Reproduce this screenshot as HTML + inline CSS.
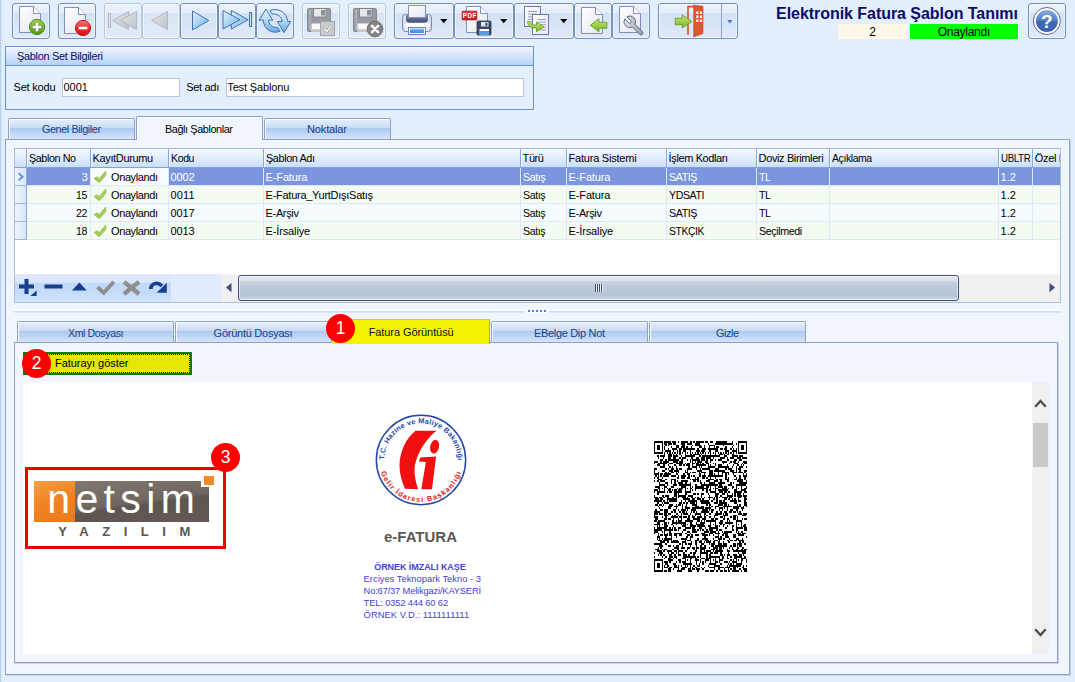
<!DOCTYPE html>
<html><head><meta charset="utf-8"><title>Elektronik Fatura Şablon Tanımı</title>
<style>
html,body{margin:0;padding:0}
body{width:1075px;height:682px;overflow:hidden;position:relative;background:#e3efff;font-family:"Liberation Sans",sans-serif;font-size:11px}
div,span.t,svg{position:absolute;box-sizing:border-box}
span.t{white-space:pre;line-height:1}
.btn{border:1px solid #7191c2;border-radius:3px;background:linear-gradient(#eaf1fb 0,#e6eefa 26%,#d3e1f5 27%,#dfe9f8 100%);box-shadow:inset 0 0 0 1px rgba(255,255,255,.55)}
.btn.dis{border-color:#b6c7e0;background:linear-gradient(#eaf1fb 0,#e6eefa 26%,#d9e4f4 27%,#e2ebf8 100%)}
.tab{border:1px solid #8ba3cb;border-bottom:none;border-radius:2px 2px 0 0;background:linear-gradient(#e6eefb 0,#dbe6f8 20%,#c9dbf5 45%,#adc9f0 47%,#c2d7f5 75%,#d6e4f9 100%);box-shadow:inset 1px 1px 0 rgba(255,255,255,.8)}
.pnl{border:1px solid #8ba1c9;background:#f1f6fe;box-shadow:1px 1px 0 #c3d2ea}

</style></head>
<body>
<div style="left:0px;top:0px;width:1px;height:682px;background:#b5cfec"></div>
<div style="left:1px;top:0px;width:1px;height:682px;background:#d9e7f9"></div>
<div class="btn" style="left:12px;top:3px;width:38px;height:36px"></div>
<div class="btn" style="left:58px;top:3px;width:38px;height:36px"></div>
<div class="btn dis" style="left:104px;top:3px;width:38px;height:36px"></div>
<div class="btn dis" style="left:142px;top:3px;width:38px;height:36px"></div>
<div class="btn" style="left:180px;top:3px;width:38px;height:36px"></div>
<div class="btn" style="left:218px;top:3px;width:38px;height:36px"></div>
<div class="btn" style="left:256px;top:3px;width:38px;height:36px"></div>
<div class="btn dis" style="left:302px;top:3px;width:38px;height:36px"></div>
<div class="btn dis" style="left:348px;top:3px;width:38px;height:36px"></div>
<div class="btn" style="left:394px;top:3px;width:60px;height:36px"></div>
<div class="btn" style="left:454px;top:3px;width:60px;height:36px"></div>
<div class="btn" style="left:514px;top:3px;width:60px;height:36px"></div>
<div class="btn" style="left:574px;top:3px;width:38px;height:36px"></div>
<div class="btn" style="left:612px;top:3px;width:38px;height:36px"></div>
<div class="btn" style="left:658px;top:3px;width:80px;height:36px"></div>
<div style="left:721px;top:4px;width:1px;height:34px;background:#8aa3cc"></div>
<div class="btn" style="left:1028px;top:3px;width:38px;height:36px"></div>
<svg style="left:0;top:0" width="1075" height="42" viewBox="0 0 1075 42"><defs>
<linearGradient id="pg" x1="0" y1="0" x2="1" y2="1"><stop offset="0" stop-color="#ffffff"/><stop offset="1" stop-color="#e3e6f2"/></linearGradient>
<linearGradient id="gr" x1="0" y1="0" x2="0" y2="1"><stop offset="0" stop-color="#a6d64a"/><stop offset="1" stop-color="#4f9412"/></linearGradient>
<linearGradient id="rd" x1="0" y1="0" x2="0" y2="1"><stop offset="0" stop-color="#ff7a7a"/><stop offset=".5" stop-color="#f02a2a"/><stop offset="1" stop-color="#d80f0f"/></linearGradient>
<linearGradient id="bl" x1="0" y1="0" x2="1" y2="1"><stop offset="0" stop-color="#e3f2fc"/><stop offset="1" stop-color="#6fb0e6"/></linearGradient>
<linearGradient id="gy" x1="0" y1="0" x2="1" y2="1"><stop offset="0" stop-color="#e3e5e8"/><stop offset="1" stop-color="#bfc3c9"/></linearGradient>
<linearGradient id="ga" x1="0" y1="0" x2="0" y2="1"><stop offset="0" stop-color="#c6e77e"/><stop offset=".5" stop-color="#9fd04c"/><stop offset="1" stop-color="#76b42a"/></linearGradient>
<linearGradient id="hp" x1="0" y1="0" x2="0" y2="1"><stop offset="0" stop-color="#86acde"/><stop offset=".5" stop-color="#4f7cc6"/><stop offset=".52" stop-color="#3f6ab8"/><stop offset="1" stop-color="#3a63b2"/></linearGradient>
<linearGradient id="rf" x1="0" y1="0" x2="0" y2="1"><stop offset="0" stop-color="#e6f5fd"/><stop offset=".5" stop-color="#b3d8f3"/><stop offset="1" stop-color="#66a7e0"/></linearGradient>
<linearGradient id="wr" x1="0" y1="0" x2="1" y2="0"><stop offset="0" stop-color="#e3e7ec"/><stop offset="1" stop-color="#96a0ae"/></linearGradient>
<linearGradient id="pr" x1="0" y1="0" x2="1" y2="0"><stop offset="0" stop-color="#c3cee8"/><stop offset=".18" stop-color="#f4f7fc"/><stop offset=".82" stop-color="#f4f7fc"/><stop offset="1" stop-color="#c3cee8"/></linearGradient>
<linearGradient id="pdfr" x1="0" y1="0" x2="0" y2="1"><stop offset="0" stop-color="#e24040"/><stop offset="1" stop-color="#c01c1c"/></linearGradient>
<linearGradient id="ps" x1="0" y1="0" x2="0" y2="1"><stop offset="0" stop-color="#8b98ba"/><stop offset=".5" stop-color="#5b698e"/><stop offset="1" stop-color="#434f74"/></linearGradient>
<linearGradient id="pb" x1="0" y1="0" x2="0" y2="1"><stop offset="0" stop-color="#7cc0f4"/><stop offset="1" stop-color="#2f7fd6"/></linearGradient>
</defs><path d="M19.5 6.5H33.5L40.5 13.5V32.5H19.5Z" fill="url(#pg)" stroke="#7682b6" stroke-width=".9"/><path d="M33.5 6.5V13.5H40.5Z" fill="#fdfdff"/><path d="M33.5 6.5V13.5H40.5" fill="none" stroke="#7682b6" stroke-width=".9"/><circle cx="37" cy="27" r="7.6" fill="url(#gr)" stroke="#4b8a12" stroke-width="1"/><path d="M35.5 22.5h3v3h3v3h-3v3h-3v-3h-3v-3h3z" fill="#fff" stroke="#7d8c74" stroke-width=".6"/><path d="M64.5 7.5H78.5L85.5 14.5V33.5H64.5Z" fill="url(#pg)" stroke="#7682b6" stroke-width=".9"/><path d="M78.5 7.5V14.5H85.5Z" fill="#fdfdff"/><path d="M78.5 7.5V14.5H85.5" fill="none" stroke="#7682b6" stroke-width=".9"/><circle cx="83" cy="28" r="7.6" fill="url(#rd)" stroke="#c41515" stroke-width="1"/><rect x="78.5" y="26.5" width="9" height="3" fill="#fff" stroke="#a86a6a" stroke-width=".6"/><rect x="108.5" y="13.5" width="2" height="14" fill="#e2e4e8" stroke="#b4b8c0" stroke-width="1"/><path d="M128.5 11.5V29.5L112.5 20.5Z" fill="url(#gy)" stroke="#b4b8c0" stroke-width="1"/><path d="M136.5 11.5V29.5L120.5 20.5Z" fill="url(#gy)" stroke="#b4b8c0" stroke-width="1"/><path d="M167.5 11.5V29.5L151.5 20.5Z" fill="url(#gy)" stroke="#b4b8c0" stroke-width="1"/><path d="M192.5 11V30L208.8 20.5Z" fill="url(#bl)" stroke="#3f72b8" stroke-width="1"/><path d="M231.3 10.5V29L248.2 19.7Z" fill="url(#bl)" stroke="#3f72b8" stroke-width="1"/><path d="M223 10.5V29L240 19.7Z" fill="url(#bl)" stroke="#3f72b8" stroke-width="1"/><rect x="249.5" y="12.5" width="2" height="14" fill="#cfe6f8" stroke="#3f72b8" stroke-width="1"/><g fill="url(#rf)" stroke="#3a70b8" stroke-width="1" stroke-linejoin="round"><path d="M266 9L272.700 20.100L268.500 20.100C268.800 24.500 272.500 28 277.400 27.300L280.200 31.200C272 34.500 263.800 29.500 263.200 20.100L259.100 20.100Z"/><path d="M283.900 32.600L277.400 21.500L282.200 21.500C281.800 17 278 13.600 272.200 14L269.900 10.400C278.500 7.500 287 12.500 287.800 21.500L290.800 21.500Z"/></g><rect x="307.5" y="8.5" width="23" height="23" rx="1.2" fill="#989ca2" stroke="#858990"/><rect x="309" y="9" width="2" height="21" fill="#abafb5"/><rect x="313.5" y="8.5" width="12.5" height="8.5" fill="#e6e8ea" stroke="#74787f" stroke-width=".8"/><rect x="321" y="10" width="4" height="5.5" fill="#8a8e95"/><rect x="311.5" y="23.5" width="15.5" height="8" fill="#fbfbfb"/><rect x="311.5" y="29" width="15.5" height="2.5" fill="#c9cbce"/><rect x="320.5" y="21.5" width="14" height="14" fill="#c9cbce" stroke="#a2a5a9"/><path d="M324.2 28.8 L326.8 31.6 L331.2 25.8" fill="none" stroke="#9a9da2" stroke-width="2.6" stroke-linecap="round" stroke-linejoin="round"/><path d="M324.2 28.8 L326.8 31.6 L331.2 25.8" fill="none" stroke="#fff" stroke-width="1.3" stroke-linecap="round" stroke-linejoin="round"/><rect x="353.5" y="8.5" width="23" height="23" rx="1.2" fill="#989ca2" stroke="#858990"/><rect x="355" y="9" width="2" height="21" fill="#abafb5"/><rect x="359.5" y="8.5" width="12.5" height="8.5" fill="#e6e8ea" stroke="#74787f" stroke-width=".8"/><rect x="367" y="10" width="4" height="5.5" fill="#8a8e95"/><rect x="357.5" y="23.5" width="15.5" height="8" fill="#fbfbfb"/><rect x="357.5" y="29" width="15.5" height="2.5" fill="#c9cbce"/><circle cx="375" cy="29" r="7.8" fill="#858585" stroke="#6e6e6e"/><path d="M371.9 25.9 L378.1 32.1 M378.1 25.9 L371.9 32.1" stroke="#fff" stroke-width="2.5" stroke-linecap="round"/><rect x="402.5" y="14.5" width="29" height="17" rx="3" fill="url(#pr)" stroke="#7a8cc0"/><rect x="404" y="23.500" width="26" height="3" fill="#fff" opacity=".8"/><path d="M406 14.5H428V19.5Q428 22.700 424.500 22.700H409.500Q406 22.700 406 19.500Z" fill="url(#ps)"/><rect x="408.5" y="5.5" width="17" height="12" fill="url(#pg)" stroke="#8490b6"/><rect x="408.5" y="27.500" width="17" height="7" fill="#fff" stroke="#6474aa" stroke-width=".9"/><rect x="410" y="28.600" width="14" height="4.300" fill="url(#pb)"/><path d="M466.5 6.5H480.5L487.5 13.5V32.5H466.5Z" fill="url(#pg)" stroke="#7682b6" stroke-width=".9"/><path d="M480.5 6.5V13.5H487.5Z" fill="#fdfdff"/><path d="M480.5 6.5V13.5H487.5" fill="none" stroke="#7682b6" stroke-width=".9"/><rect x="462" y="11" width="15" height="9" rx=".8" fill="url(#pdfr)" stroke="#b51a1a" stroke-width=".6"/><text x="469.8" y="17.800" font-family="Liberation Sans, sans-serif" font-size="6.3" font-weight="700" fill="#fff" text-anchor="middle" letter-spacing=".45">PDF</text><rect x="477" y="21" width="14" height="14" rx="1" fill="#3b4664" stroke="#2c3650" stroke-width=".8"/><rect x="481" y="22" width="7.5" height="4.5" fill="#dfe6f5"/><rect x="485.5" y="22.800" width="1.8" height="3" fill="#2c3650"/><rect x="479.5" y="29" width="9.5" height="5.5" fill="#fff"/><rect x="479.5" y="31" width="9.5" height="3.5" fill="#4b9be8"/><rect x="524.5" y="6.5" width="16" height="20" fill="url(#pg)" stroke="#6b78ad"/><rect x="528" y="11.0" width="9" height="1" fill="#9aa4c6"/><rect x="528" y="13.6" width="9" height="1" fill="#9aa4c6"/><rect x="528" y="16.2" width="9" height="1" fill="#9aa4c6"/><rect x="528" y="18.8" width="9" height="1" fill="#9aa4c6"/><rect x="528" y="21.4" width="9" height="1" fill="#9aa4c6"/><rect x="532.5" y="14.5" width="16" height="20" fill="url(#pg)" stroke="#6b78ad"/><rect x="538" y="19.0" width="8" height="1" fill="#9aa4c6"/><rect x="538" y="21.6" width="8" height="1" fill="#9aa4c6"/><rect x="538" y="24.2" width="8" height="1" fill="#9aa4c6"/><rect x="538" y="26.8" width="8" height="1" fill="#9aa4c6"/><rect x="538" y="29.4" width="8" height="1" fill="#9aa4c6"/><path d="M527.5 21.5 C528 26.5 531.500 28.200 536.5 28 L536.5 31.8 L544 27 L536.5 22 L536.5 25 C533 25.2 530.500 24.500 529.500 21.500Z" fill="url(#ga)" stroke="#5f9d20" stroke-width=".8" stroke-linejoin="round"/><path d="M581.5 7.5H595.5L602.5 14.5V33.5H581.5Z" fill="url(#pg)" stroke="#7682b6" stroke-width=".9"/><path d="M595.5 7.5V14.5H602.5Z" fill="#fdfdff"/><path d="M595.5 7.5V14.5H602.5" fill="none" stroke="#7682b6" stroke-width=".9"/><path d="M590.3 25.2 L599 18.700 V22.3 H606.8 V28.2 H599 V31.8Z" fill="url(#ga)" stroke="#5f9d20" stroke-width=".9" stroke-linejoin="round"/><path d="M619.5 6.5H633.5L640.5 13.5V32.5H619.5Z" fill="url(#pg)" stroke="#7682b6" stroke-width=".9"/><path d="M633.5 6.5V13.5H640.5Z" fill="#fdfdff"/><path d="M633.5 6.5V13.5H640.5" fill="none" stroke="#7682b6" stroke-width=".9"/><path d="M624.780 18.900A5.800 5.800 0 0 0 632.350 27.030L639.770 34.450A1.900 1.900 0 0 0 642.450 31.770L635.030 24.350A5.800 5.800 0 0 0 626.900 16.780L630.860 20.740A1.500 1.500 0 0 1 628.740 22.860Z" fill="url(#wr)" stroke="#566072" stroke-width=".9" stroke-linejoin="round"/><path d="M688 35 V6.6 H702.500" fill="none" stroke="#d4512b" stroke-width="1.6"/><path d="M693.7 5 L703 6.6 V33.6 L693.7 37Z" fill="#dc5630" stroke="#c7472a" stroke-width=".6"/><rect x="696.1" y="11.4" width="2.4" height="2.6" fill="#d9f0de"/><rect x="696.1" y="15.4" width="2.4" height="2.6" fill="#d9f0de"/><rect x="696.1" y="19.4" width="2.4" height="2.6" fill="#d9f0de"/><rect x="699.8" y="11.4" width="2.4" height="2.6" fill="#d9f0de"/><rect x="699.8" y="15.4" width="2.4" height="2.6" fill="#d9f0de"/><rect x="699.8" y="19.4" width="2.4" height="2.6" fill="#d9f0de"/><path d="M675.3 18.3 H682.2 V14.9 L691.8 21.5 L682.2 28 V24.700 H675.3Z" fill="url(#ga)" stroke="#5f9d20" stroke-width=".9" stroke-linejoin="round"/><circle cx="1046.9" cy="21" r="13.5" fill="#fff" stroke="#5a66a0" stroke-width="1"/><circle cx="1046.9" cy="21" r="11" fill="url(#hp)"/><text x="1046.9" y="28" font-family="Liberation Sans, sans-serif" font-size="19" font-weight="700" fill="#fff" text-anchor="middle">?</text></svg>
<svg style="left:439.8px;top:19px" width="7.4" height="5.2" viewBox="0 0 7.4 5.2"><path d="M0.2 0H7.2L3.7 4.2Z" fill="#000"/></svg>
<svg style="left:499.8px;top:19px" width="7.4" height="5.2" viewBox="0 0 7.4 5.2"><path d="M0.2 0H7.2L3.7 4.2Z" fill="#000"/></svg>
<svg style="left:559.8px;top:19px" width="7.4" height="5.2" viewBox="0 0 7.4 5.2"><path d="M0.2 0H7.2L3.7 4.2Z" fill="#000"/></svg>
<svg style="left:726.6px;top:20px" width="5.8" height="4.4" viewBox="0 0 5.8 4.4"><path d="M0.2 0H5.6L2.9 3.4Z" fill="#4a78c0"/></svg>
<span class="t" style="top:5.76px;font-size:16px;color:#0b0b6b;font-weight:700;letter-spacing:-0.044px;left:776.00px;">Elektronik Fatura Şablon Tanımı</span>
<div style="left:838px;top:24px;width:70px;height:15px;background:#fff8e8"></div>
<div style="left:910px;top:24px;width:108px;height:15px;background:#00ff00"></div>
<span class="t" style="top:25.84px;font-size:12px;color:#000;left:869.16px;">2</span>
<span class="t" style="top:25.84px;font-size:12px;color:#000;letter-spacing:-0.275px;left:937.75px;">Onaylandı</span>
<div style="left:5px;top:46px;width:529px;height:64px;border:1px solid #6593dc"></div>
<div style="left:6px;top:47px;width:527px;height:19px;background:linear-gradient(#eaf2fe 0,#d5e5fb 45%,#b5d1f8 100%);border-bottom:1px solid #6593dc;border-top:1px solid #fff"></div>
<span class="t" style="top:50.69px;font-size:11px;color:#0a0a6a;letter-spacing:-0.334px;left:17px;">Şablon Set Bilgileri</span>
<span class="t" style="top:81.69px;font-size:11px;color:#000;letter-spacing:-0.203px;left:13.5px;">Set kodu</span>
<div style="left:62px;top:78px;width:118px;height:19px;background:#fff;border:1px solid #b7c6de"></div>
<span class="t" style="top:81.69px;font-size:11px;color:#000;letter-spacing:0.005px;left:63.5px;">0001</span>
<span class="t" style="top:81.69px;font-size:11px;color:#000;letter-spacing:-0.310px;left:186.2px;">Set adı</span>
<div style="left:226px;top:78px;width:298px;height:19px;background:#fff;border:1px solid #b7c6de"></div>
<span class="t" style="top:81.69px;font-size:11px;color:#000;letter-spacing:-0.146px;left:227.3px;">Test Şablonu</span>
<div class="pnl" style="left:5px;top:139px;width:1065px;height:536px"></div>
<div class="tab" style="left:8px;top:118px;width:127px;height:21px"></div>
<div class="tab" style="left:264px;top:118px;width:127px;height:21px"></div>
<div class="tab" style="left:136px;top:116px;width:127px;height:24px;background:#f1f6fe;border-color:#8ba1c9"></div>
<span class="t" style="top:123.69px;font-size:11px;color:#15428b;letter-spacing:-0.420px;left:42px;transform:scaleX(0.9840);transform-origin:0 0;">Genel Bilgiler</span>
<span class="t" style="top:123.69px;font-size:11px;color:#000;letter-spacing:-0.420px;left:164.6px;transform:scaleX(0.9894);transform-origin:0 0;">Bağlı Şablonlar</span>
<span class="t" style="top:123.69px;font-size:11px;color:#15428b;letter-spacing:-0.138px;left:307px;">Noktalar</span>
<div style="left:14px;top:148px;width:1047px;height:155px;background:#fff;border:1px solid #a9c0e3"></div>
<div style="left:14px;top:148px;width:1047px;height:20px;background:linear-gradient(#f5f9ff 0,#e6f0fd 40%,#c9defb 100%);border-top:1px solid #a3badd;border-bottom:1px solid #7fa3dc;border-left:1px solid #a9c0e3;border-right:1px solid #a9c0e3"></div>
<div style="left:26px;top:149px;width:1px;height:18px;background:#86a8dc"></div>
<div style="left:27px;top:149px;width:1px;height:18px;background:rgba(255,255,255,.75)"></div>
<div style="left:90px;top:149px;width:1px;height:18px;background:#86a8dc"></div>
<div style="left:91px;top:149px;width:1px;height:18px;background:rgba(255,255,255,.75)"></div>
<div style="left:168px;top:149px;width:1px;height:18px;background:#86a8dc"></div>
<div style="left:169px;top:149px;width:1px;height:18px;background:rgba(255,255,255,.75)"></div>
<div style="left:263px;top:149px;width:1px;height:18px;background:#86a8dc"></div>
<div style="left:264px;top:149px;width:1px;height:18px;background:rgba(255,255,255,.75)"></div>
<div style="left:520px;top:149px;width:1px;height:18px;background:#86a8dc"></div>
<div style="left:521px;top:149px;width:1px;height:18px;background:rgba(255,255,255,.75)"></div>
<div style="left:566px;top:149px;width:1px;height:18px;background:#86a8dc"></div>
<div style="left:567px;top:149px;width:1px;height:18px;background:rgba(255,255,255,.75)"></div>
<div style="left:666px;top:149px;width:1px;height:18px;background:#86a8dc"></div>
<div style="left:667px;top:149px;width:1px;height:18px;background:rgba(255,255,255,.75)"></div>
<div style="left:756px;top:149px;width:1px;height:18px;background:#86a8dc"></div>
<div style="left:757px;top:149px;width:1px;height:18px;background:rgba(255,255,255,.75)"></div>
<div style="left:829px;top:149px;width:1px;height:18px;background:#86a8dc"></div>
<div style="left:830px;top:149px;width:1px;height:18px;background:rgba(255,255,255,.75)"></div>
<div style="left:998px;top:149px;width:1px;height:18px;background:#86a8dc"></div>
<div style="left:999px;top:149px;width:1px;height:18px;background:rgba(255,255,255,.75)"></div>
<div style="left:1032px;top:149px;width:1px;height:18px;background:#86a8dc"></div>
<div style="left:1033px;top:149px;width:1px;height:18px;background:rgba(255,255,255,.75)"></div>
<div style="left:27px;top:168px;width:1033px;height:18px;background:#7b96df;border-bottom:1px solid #dce8fa"></div>
<div style="left:91px;top:168px;width:77px;height:17px;background:#f8fbff"></div>
<div style="left:90px;top:168px;width:1px;height:18px;background:#dce8fa"></div>
<div style="left:168px;top:168px;width:1px;height:18px;background:#dce8fa"></div>
<div style="left:263px;top:168px;width:1px;height:18px;background:#dce8fa"></div>
<div style="left:520px;top:168px;width:1px;height:18px;background:#dce8fa"></div>
<div style="left:566px;top:168px;width:1px;height:18px;background:#dce8fa"></div>
<div style="left:666px;top:168px;width:1px;height:18px;background:#dce8fa"></div>
<div style="left:756px;top:168px;width:1px;height:18px;background:#dce8fa"></div>
<div style="left:829px;top:168px;width:1px;height:18px;background:#dce8fa"></div>
<div style="left:998px;top:168px;width:1px;height:18px;background:#dce8fa"></div>
<div style="left:1032px;top:168px;width:1px;height:18px;background:#dce8fa"></div>
<div style="left:15px;top:168px;width:12px;height:18px;background:linear-gradient(90deg,#eef4fd,#d9e6f9);border-bottom:1px solid #9fbbe3;border-right:1px solid #86a8dc"></div>
<div style="left:27px;top:186px;width:1033px;height:18px;background:#f4fbf1;border-bottom:1px solid #dce8fa"></div>
<div style="left:90px;top:186px;width:1px;height:18px;background:#dce8fa"></div>
<div style="left:168px;top:186px;width:1px;height:18px;background:#dce8fa"></div>
<div style="left:263px;top:186px;width:1px;height:18px;background:#dce8fa"></div>
<div style="left:520px;top:186px;width:1px;height:18px;background:#dce8fa"></div>
<div style="left:566px;top:186px;width:1px;height:18px;background:#dce8fa"></div>
<div style="left:666px;top:186px;width:1px;height:18px;background:#dce8fa"></div>
<div style="left:756px;top:186px;width:1px;height:18px;background:#dce8fa"></div>
<div style="left:829px;top:186px;width:1px;height:18px;background:#dce8fa"></div>
<div style="left:998px;top:186px;width:1px;height:18px;background:#dce8fa"></div>
<div style="left:1032px;top:186px;width:1px;height:18px;background:#dce8fa"></div>
<div style="left:15px;top:186px;width:12px;height:18px;background:linear-gradient(90deg,#eef4fd,#d9e6f9);border-bottom:1px solid #9fbbe3;border-right:1px solid #86a8dc"></div>
<div style="left:27px;top:204px;width:1033px;height:18px;background:#f5faff;border-bottom:1px solid #dce8fa"></div>
<div style="left:90px;top:204px;width:1px;height:18px;background:#dce8fa"></div>
<div style="left:168px;top:204px;width:1px;height:18px;background:#dce8fa"></div>
<div style="left:263px;top:204px;width:1px;height:18px;background:#dce8fa"></div>
<div style="left:520px;top:204px;width:1px;height:18px;background:#dce8fa"></div>
<div style="left:566px;top:204px;width:1px;height:18px;background:#dce8fa"></div>
<div style="left:666px;top:204px;width:1px;height:18px;background:#dce8fa"></div>
<div style="left:756px;top:204px;width:1px;height:18px;background:#dce8fa"></div>
<div style="left:829px;top:204px;width:1px;height:18px;background:#dce8fa"></div>
<div style="left:998px;top:204px;width:1px;height:18px;background:#dce8fa"></div>
<div style="left:1032px;top:204px;width:1px;height:18px;background:#dce8fa"></div>
<div style="left:15px;top:204px;width:12px;height:18px;background:linear-gradient(90deg,#eef4fd,#d9e6f9);border-bottom:1px solid #9fbbe3;border-right:1px solid #86a8dc"></div>
<div style="left:27px;top:222px;width:1033px;height:18px;background:#f4fbf1;border-bottom:1px solid #dce8fa"></div>
<div style="left:90px;top:222px;width:1px;height:18px;background:#dce8fa"></div>
<div style="left:168px;top:222px;width:1px;height:18px;background:#dce8fa"></div>
<div style="left:263px;top:222px;width:1px;height:18px;background:#dce8fa"></div>
<div style="left:520px;top:222px;width:1px;height:18px;background:#dce8fa"></div>
<div style="left:566px;top:222px;width:1px;height:18px;background:#dce8fa"></div>
<div style="left:666px;top:222px;width:1px;height:18px;background:#dce8fa"></div>
<div style="left:756px;top:222px;width:1px;height:18px;background:#dce8fa"></div>
<div style="left:829px;top:222px;width:1px;height:18px;background:#dce8fa"></div>
<div style="left:998px;top:222px;width:1px;height:18px;background:#dce8fa"></div>
<div style="left:1032px;top:222px;width:1px;height:18px;background:#dce8fa"></div>
<div style="left:15px;top:222px;width:12px;height:18px;background:linear-gradient(90deg,#eef4fd,#d9e6f9);border-bottom:1px solid #9fbbe3;border-right:1px solid #86a8dc"></div>
<span class="t" style="top:152.69px;font-size:11px;color:#000;letter-spacing:-0.420px;left:28.6px;transform:scaleX(0.9789);transform-origin:0 0;">Şablon No</span>
<span class="t" style="top:152.69px;font-size:11px;color:#000;letter-spacing:-0.370px;left:92.6px;">KayıtDurumu</span>
<span class="t" style="top:152.69px;font-size:11px;color:#000;letter-spacing:-0.420px;left:170.6px;transform:scaleX(0.9614);transform-origin:0 0;">Kodu</span>
<span class="t" style="top:152.69px;font-size:11px;color:#000;letter-spacing:-0.420px;left:265.6px;transform:scaleX(0.9911);transform-origin:0 0;">Şablon Adı</span>
<span class="t" style="top:152.69px;font-size:11px;color:#000;letter-spacing:-0.408px;left:522.6px;">Türü</span>
<span class="t" style="top:152.69px;font-size:11px;color:#000;letter-spacing:-0.225px;left:568.6px;">Fatura Sistemi</span>
<span class="t" style="top:152.69px;font-size:11px;color:#000;letter-spacing:-0.384px;left:668.6px;">İşlem Kodları</span>
<span class="t" style="top:152.69px;font-size:11px;color:#000;letter-spacing:-0.377px;left:758.6px;">Doviz Birimleri</span>
<span class="t" style="top:152.69px;font-size:11px;color:#000;letter-spacing:-0.420px;left:831.6px;transform:scaleX(0.9501);transform-origin:0 0;">Açıklama</span>
<span class="t" style="top:152.69px;font-size:11px;color:#000;letter-spacing:-0.420px;left:1000.6px;transform:scaleX(0.8847);transform-origin:0 0;">UBLTR</span>
<div style="left:1034px;top:149px;width:26px;height:18px;overflow:hidden"><span class="t" style="left:0.7px;top:3.69px;letter-spacing:-0.3px">Özel Kodlar</span></div>
<span class="t" style="top:171.69px;font-size:11px;color:#fff;letter-spacing:-0.325px;left:81.70px;">3</span>
<span class="t" style="top:171.69px;font-size:11px;color:#000;letter-spacing:-0.395px;left:111px;">Onaylandı</span>
<svg style="left:92px;top:168px" width="16" height="17" viewBox="92 168 16 17"><path d="M94 178.4L97.5 176.700L98.800 179L105.800 171V175.600L99.200 182.800Z" fill="#a3cf55" stroke="#84b23c" stroke-width=".6" stroke-linejoin="round"/></svg>
<span class="t" style="top:171.69px;font-size:11px;color:#fff;letter-spacing:-0.161px;left:170.6px;">0002</span>
<span class="t" style="top:171.69px;font-size:11px;color:#fff;letter-spacing:-0.142px;left:265.6px;">E-Fatura</span>
<span class="t" style="top:171.69px;font-size:11px;color:#fff;letter-spacing:-0.420px;left:522.6px;transform:scaleX(0.9616);transform-origin:0 0;">Satış</span>
<span class="t" style="top:171.69px;font-size:11px;color:#fff;letter-spacing:-0.142px;left:568.6px;">E-Fatura</span>
<span class="t" style="top:171.69px;font-size:11px;color:#fff;letter-spacing:-0.420px;left:668.6px;transform:scaleX(0.9726);transform-origin:0 0;">SATIŞ</span>
<span class="t" style="top:171.69px;font-size:11px;color:#fff;letter-spacing:-0.420px;left:758.6px;transform:scaleX(0.9498);transform-origin:0 0;">TL</span>
<span class="t" style="top:171.69px;font-size:11px;color:#fff;letter-spacing:0.052px;left:1000.6px;">1.2</span>
<span class="t" style="top:189.69px;font-size:11px;color:#000;letter-spacing:-0.420px;left:76.20px;transform:scaleX(0.9552);transform-origin:0 0;">15</span>
<span class="t" style="top:189.69px;font-size:11px;color:#000;letter-spacing:-0.395px;left:111px;">Onaylandı</span>
<svg style="left:92px;top:186px" width="16" height="17" viewBox="92 168 16 17"><path d="M94 178.4L97.5 176.700L98.800 179L105.800 171V175.600L99.200 182.800Z" fill="#a3cf55" stroke="#84b23c" stroke-width=".6" stroke-linejoin="round"/></svg>
<span class="t" style="top:189.69px;font-size:11px;color:#000;letter-spacing:0.115px;left:170.6px;">0011</span>
<span class="t" style="top:189.69px;font-size:11px;color:#000;letter-spacing:-0.267px;left:265.6px;">E-Fatura_YurtDışıSatış</span>
<span class="t" style="top:189.69px;font-size:11px;color:#000;letter-spacing:-0.420px;left:522.6px;transform:scaleX(0.9616);transform-origin:0 0;">Satış</span>
<span class="t" style="top:189.69px;font-size:11px;color:#000;letter-spacing:-0.142px;left:568.6px;">E-Fatura</span>
<span class="t" style="top:189.69px;font-size:11px;color:#000;letter-spacing:-0.420px;left:668.6px;transform:scaleX(0.9614);transform-origin:0 0;">YDSATI</span>
<span class="t" style="top:189.69px;font-size:11px;color:#000;letter-spacing:-0.420px;left:758.6px;transform:scaleX(0.9498);transform-origin:0 0;">TL</span>
<span class="t" style="top:189.69px;font-size:11px;color:#000;letter-spacing:0.052px;left:1000.6px;">1.2</span>
<span class="t" style="top:207.69px;font-size:11px;color:#000;letter-spacing:-0.420px;left:76.20px;transform:scaleX(0.9552);transform-origin:0 0;">22</span>
<span class="t" style="top:207.69px;font-size:11px;color:#000;letter-spacing:-0.395px;left:111px;">Onaylandı</span>
<svg style="left:92px;top:204px" width="16" height="17" viewBox="92 168 16 17"><path d="M94 178.4L97.5 176.700L98.800 179L105.800 171V175.600L99.200 182.800Z" fill="#a3cf55" stroke="#84b23c" stroke-width=".6" stroke-linejoin="round"/></svg>
<span class="t" style="top:207.69px;font-size:11px;color:#000;letter-spacing:-0.161px;left:170.6px;">0017</span>
<span class="t" style="top:207.69px;font-size:11px;color:#000;letter-spacing:-0.359px;left:265.6px;">E-Arşiv</span>
<span class="t" style="top:207.69px;font-size:11px;color:#000;letter-spacing:-0.420px;left:522.6px;transform:scaleX(0.9616);transform-origin:0 0;">Satış</span>
<span class="t" style="top:207.69px;font-size:11px;color:#000;letter-spacing:-0.359px;left:568.6px;">E-Arşiv</span>
<span class="t" style="top:207.69px;font-size:11px;color:#000;letter-spacing:-0.420px;left:668.6px;transform:scaleX(0.9726);transform-origin:0 0;">SATIŞ</span>
<span class="t" style="top:207.69px;font-size:11px;color:#000;letter-spacing:-0.420px;left:758.6px;transform:scaleX(0.9498);transform-origin:0 0;">TL</span>
<span class="t" style="top:207.69px;font-size:11px;color:#000;letter-spacing:0.052px;left:1000.6px;">1.2</span>
<span class="t" style="top:225.69px;font-size:11px;color:#000;letter-spacing:-0.420px;left:76.20px;transform:scaleX(0.9552);transform-origin:0 0;">18</span>
<span class="t" style="top:225.69px;font-size:11px;color:#000;letter-spacing:-0.395px;left:111px;">Onaylandı</span>
<svg style="left:92px;top:222px" width="16" height="17" viewBox="92 168 16 17"><path d="M94 178.4L97.5 176.700L98.800 179L105.800 171V175.600L99.200 182.800Z" fill="#a3cf55" stroke="#84b23c" stroke-width=".6" stroke-linejoin="round"/></svg>
<span class="t" style="top:225.69px;font-size:11px;color:#000;letter-spacing:-0.161px;left:170.6px;">0013</span>
<span class="t" style="top:225.69px;font-size:11px;color:#000;letter-spacing:-0.138px;left:265.6px;">E-İrsaliye</span>
<span class="t" style="top:225.69px;font-size:11px;color:#000;letter-spacing:-0.420px;left:522.6px;transform:scaleX(0.9616);transform-origin:0 0;">Satış</span>
<span class="t" style="top:225.69px;font-size:11px;color:#000;letter-spacing:-0.138px;left:568.6px;">E-İrsaliye</span>
<span class="t" style="top:225.69px;font-size:11px;color:#000;letter-spacing:-0.420px;left:668.6px;transform:scaleX(0.9406);transform-origin:0 0;">STKÇIK</span>
<span class="t" style="top:225.69px;font-size:11px;color:#000;letter-spacing:-0.420px;left:758.6px;transform:scaleX(0.9746);transform-origin:0 0;">Seçilmedi</span>
<span class="t" style="top:225.69px;font-size:11px;color:#000;letter-spacing:0.052px;left:1000.6px;">1.2</span>
<svg style="left:16px;top:170px" width="10" height="14" viewBox="16 170 10 14"><path d="M18.700 173.300L22.600 176.800L18.700 180.300" fill="none" stroke="#6496e6" stroke-width="2"/></svg>
<div style="left:15px;top:274px;width:156px;height:28px;background:linear-gradient(#dfeafc 0,#d9e6fc 30%,#bfd8fa 32%,#c6dcfa 70%,#d6e5fb 100%)"></div>
<div style="left:171px;top:274px;width:50px;height:28px;background:#e0ecfd"></div>
<div style="left:221px;top:274px;width:839px;height:28px;background:#f0f0f0;border-top:1px solid #f7f7f7"></div>
<div style="left:238px;top:275px;width:721px;height:26px;border:1px solid #3f507b;border-radius:3px;background:linear-gradient(#e4e8ef 0,#dde2ea 20%,#c7d1e1 24%,#bdc9dc 50%,#b5c2d7 78%,#c3cddf 90%,#d3dae6 100%);box-shadow:inset 0 0 0 1px rgba(255,255,255,.55)"></div>
<div style="left:595px;top:284px;width:8px;height:8px;background:#eef1f6"></div>
<div style="left:595px;top:284px;width:1px;height:8px;background:#3a4a74"></div>
<div style="left:597px;top:284px;width:1px;height:8px;background:#3a4a74"></div>
<div style="left:599px;top:284px;width:1px;height:8px;background:#3a4a74"></div>
<div style="left:601px;top:284px;width:1px;height:8px;background:#3a4a74"></div>
<svg style="left:225px;top:282px" width="8" height="11" viewBox="0 0 8 11"><path d="M6.500 1V10.200L1 5.600Z" fill="#3f4f78"/></svg>
<svg style="left:1048px;top:282px" width="8" height="11" viewBox="0 0 8 11"><path d="M1.500 1V10.200L7 5.600Z" fill="#3f4f78"/></svg>
<svg style="left:0;top:272px" width="180" height="32" viewBox="0 272 180 32"><path d="M24.5 279h4v5.500h5.500v4h-5.500v5.500h-4v-5.500h-5.500v-4h5.500z" fill="#173f8f"/><path d="M36.600 290.400v5.600h-6.200z" fill="#173f8f"/><rect x="44.500" y="284.500" width="18" height="4" fill="#173f8f"/><path d="M72 290.500h14.800l-7.400 -8z" fill="#173f8f"/><path d="M97.500 287.200 L103.800 292.800 L113.700 281.800" fill="none" stroke="#8e8e8e" stroke-width="3.900"/><path d="M124 281.800 L139 294 M139 281.800 L124 294" fill="none" stroke="#8e8e8e" stroke-width="4.300"/><path d="M150.800 289 C150.800 283.500 157.500 281.200 162 286" fill="none" stroke="#173f8f" stroke-width="3.600"/><path d="M166.800 282.700v10.100h-10.100z" fill="#173f8f"/></svg>
<div style="left:14px;top:309px;width:1047px;height:2px;background:#fafcff"></div>
<div style="left:14px;top:311px;width:1047px;height:2px;background:linear-gradient(#c6dbf8,#dfeafc)"></div>
<div style="left:525px;top:309px;width:24px;height:4px;background:#f8fbff"></div>
<div style="left:529px;top:311px;width:2px;height:2px;background:#fff"></div>
<div style="left:528px;top:310px;width:2px;height:2px;background:#4a80d2"></div>
<div style="left:533px;top:311px;width:2px;height:2px;background:#fff"></div>
<div style="left:532px;top:310px;width:2px;height:2px;background:#4a80d2"></div>
<div style="left:537px;top:311px;width:2px;height:2px;background:#fff"></div>
<div style="left:536px;top:310px;width:2px;height:2px;background:#4a80d2"></div>
<div style="left:541px;top:311px;width:2px;height:2px;background:#fff"></div>
<div style="left:540px;top:310px;width:2px;height:2px;background:#4a80d2"></div>
<div style="left:545px;top:311px;width:2px;height:2px;background:#fff"></div>
<div style="left:544px;top:310px;width:2px;height:2px;background:#4a80d2"></div>
<div class="pnl" style="left:14px;top:342px;width:1044px;height:321px"></div>
<div class="tab" style="left:17px;top:321px;width:157px;height:21px"></div>
<span class="t" style="top:327.69px;font-size:11px;color:#15428b;letter-spacing:-0.420px;left:68px;transform:scaleX(0.9644);transform-origin:0 0;">Xml Dosyası</span>
<div class="tab" style="left:175px;top:321px;width:157px;height:21px"></div>
<span class="t" style="top:327.69px;font-size:11px;color:#15428b;letter-spacing:-0.253px;left:213.6px;">Görüntü Dosyası</span>
<div class="tab" style="left:491px;top:321px;width:157px;height:21px"></div>
<span class="t" style="top:327.69px;font-size:11px;color:#15428b;letter-spacing:-0.325px;left:534px;">EBelge Dip Not</span>
<div class="tab" style="left:649px;top:321px;width:157px;height:21px"></div>
<span class="t" style="top:327.69px;font-size:11px;color:#15428b;letter-spacing:-0.420px;left:716px;transform:scaleX(0.9836);transform-origin:0 0;">Gizle</span>
<div style="left:332px;top:319px;width:158px;height:25px;background:#f4f400;border-right:1px solid #a8a86a;border-top:1px solid #c9c95a"></div>
<span class="t" style="top:326.69px;font-size:11px;color:#111;letter-spacing:-0.081px;left:368.7px;">Fatura Görüntüsü</span>
<div style="left:23px;top:352px;width:169px;height:23px;background:#e6e600;border:2px solid #0c7a0c"></div>
<div style="left:25px;top:354px;width:165px;height:19px;border:1px dotted #222"></div>
<span class="t" style="top:357.69px;font-size:11px;color:#000;letter-spacing:-0.035px;left:55px;">Faturayı göster</span>
<div style="left:23px;top:382px;width:1009px;height:272px;background:#fff"></div>
<div style="left:1032px;top:382px;width:17px;height:272px;background:#f0f0f0"></div>
<div style="left:1033px;top:423px;width:15px;height:44px;background:#c9c9c9"></div>
<svg style="left:1034px;top:398px" width="13" height="11" viewBox="0 0 13 11"><path d="M1.2 8.8 L6.5 3 L11.8 8.8" fill="none" stroke="#505050" stroke-width="2.4"/></svg>
<svg style="left:1034px;top:627px" width="13" height="11" viewBox="0 0 13 11"><path d="M1.2 2.2 L6.5 8 L11.8 2.2" fill="none" stroke="#505050" stroke-width="2.4"/></svg>
<div style="left:25px;top:467px;width:201px;height:82px;border:3px solid #ee0000"></div>
<div style="left:34px;top:481px;width:41px;height:40.5px;background:linear-gradient(160deg,#f6a048 0,#f08424 45%,#ee7a18 100%)"></div>
<div style="left:75px;top:481px;width:134px;height:40.5px;background:linear-gradient(172deg,#80776f 0,#6f6660 50%,#5d5550 56%,#635a55 100%)"></div>
<div style="left:201px;top:473px;width:15px;height:14px;background:#fff"></div>
<div style="left:204px;top:476px;width:10px;height:9px;background:#f08a2a"></div>
<span class="t" style="top:478.59px;font-size:41px;color:#fff;letter-spacing:5.347px;left:47.3px;">netsim</span>
<span class="t" style="top:524.80px;font-size:13px;color:#5a5552;font-weight:700;letter-spacing:13.531px;left:58.3px;">YAZILIM</span>
<span class="t" style="top:529.10px;font-size:15px;color:#585858;font-weight:700;letter-spacing:-0.009px;left:384.00px;">e-FATURA</span>
<span class="t" style="top:562.98px;font-size:9px;color:#4444d2;font-weight:700;letter-spacing:-0.063px;left:374.25px;">ÖRNEK İMZALI KAŞE</span>
<span class="t" style="top:575.10px;font-size:9.33px;color:#4444d2;letter-spacing:0.018px;left:363.6px;">Erciyes Teknopark Tekno - 3</span>
<span class="t" style="top:587.10px;font-size:9.33px;color:#4444d2;letter-spacing:-0.167px;left:363.6px;">No:67/37 Melikgazi/KAYSERİ</span>
<span class="t" style="top:599.10px;font-size:9.33px;color:#4444d2;letter-spacing:-0.147px;left:363.6px;">TEL: 0352 444 60 62</span>
<span class="t" style="top:611.10px;font-size:9.33px;color:#4444d2;letter-spacing:0.077px;left:363.6px;">ÖRNEK V.D.: 1111111111</span>
<svg style="left:370.5px;top:410.4px" width="100" height="100" viewBox="0 0 100 100">
<defs><path id="gtop" d="M13.3 50 A36.7 36.7 0 0 1 86.7 50"/><path id="gbot" d="M9.73 61.93 A42 42 0 0 0 90.06 62.63"/></defs>
<circle cx="50" cy="50" r="44.65" fill="#fff" stroke="#2247a8" stroke-width="1.5"/>
<text font-family="Liberation Sans, sans-serif" font-size="7.3" font-weight="700" fill="#1f4aa8" letter-spacing="0.25"><textPath href="#gtop" startOffset="0.3">T.C. Hazine ve Maliye Bakanlığı</textPath></text>
<text font-family="Liberation Sans, sans-serif" font-size="7.3" font-weight="700" fill="#e01818" letter-spacing="1.12"><textPath href="#gbot" startOffset="0.3">Gelir İdaresi Başkanlığı</textPath></text>
<path fill="#f01010" d="M44.6 20.8 L65.7 20.8 C58 26 47 40 43.8 55.6 C43 63 44.5 72 47.2 79.2 L33.9 78.7 C30.5 71 28.5 63 28.5 55.6 C28.5 42 35 28 44.6 20.8Z"/>
<ellipse cx="63.6" cy="36.7" rx="4.4" ry="7" transform="rotate(13 63.6 36.7)" fill="#f01010"/>
<path fill="#f01010" d="M49.2 47.4 L65.1 46.4 L61 79.2 L50.3 79.2 L54.9 52 L48 51.5Z"/>
</svg>
<svg style="left:654px;top:441.4px" width="93" height="131" viewBox="0 0 73 73" preserveAspectRatio="none" shape-rendering="crispEdges"><rect width="73" height="73" fill="#fff"/><path fill="#000" d="M0 0h7v1h-7zM8 0h5v1h-5zM14 0h3v1h-3zM19 0h1v1h-1zM21 0h6v1h-6zM28 0h2v1h-2zM31 0h1v1h-1zM33 0h6v1h-6zM40 0h2v1h-2zM44 0h2v1h-2zM49 0h8v1h-8zM61 0h1v1h-1zM66 0h7v1h-7zM0 1h1v1h-1zM6 1h1v1h-1zM8 1h2v1h-2zM11 1h3v1h-3zM15 1h2v1h-2zM21 1h3v1h-3zM26 1h4v1h-4zM32 1h4v1h-4zM42 1h1v1h-1zM48 1h14v1h-14zM64 1h1v1h-1zM66 1h1v1h-1zM72 1h1v1h-1zM0 2h1v1h-1zM2 2h3v1h-3zM6 2h1v1h-1zM9 2h1v1h-1zM11 2h1v1h-1zM17 2h3v1h-3zM22 2h2v1h-2zM30 2h1v1h-1zM32 2h5v1h-5zM39 2h1v1h-1zM43 2h5v1h-5zM54 2h1v1h-1zM62 2h1v1h-1zM66 2h1v1h-1zM68 2h3v1h-3zM72 2h1v1h-1zM0 3h1v1h-1zM2 3h3v1h-3zM6 3h1v1h-1zM8 3h1v1h-1zM13 3h1v1h-1zM17 3h3v1h-3zM21 3h3v1h-3zM25 3h2v1h-2zM29 3h1v1h-1zM35 3h3v1h-3zM39 3h1v1h-1zM43 3h1v1h-1zM47 3h1v1h-1zM49 3h2v1h-2zM56 3h1v1h-1zM61 3h1v1h-1zM66 3h1v1h-1zM68 3h3v1h-3zM72 3h1v1h-1zM0 4h1v1h-1zM2 4h3v1h-3zM6 4h1v1h-1zM8 4h1v1h-1zM11 4h1v1h-1zM14 4h4v1h-4zM20 4h2v1h-2zM23 4h9v1h-9zM34 4h1v1h-1zM38 4h3v1h-3zM42 4h8v1h-8zM52 4h2v1h-2zM55 4h2v1h-2zM60 4h1v1h-1zM62 4h1v1h-1zM64 4h1v1h-1zM66 4h1v1h-1zM68 4h3v1h-3zM72 4h1v1h-1zM0 5h1v1h-1zM6 5h1v1h-1zM9 5h4v1h-4zM15 5h1v1h-1zM18 5h1v1h-1zM20 5h1v1h-1zM23 5h2v1h-2zM28 5h1v1h-1zM33 5h3v1h-3zM37 5h3v1h-3zM43 5h2v1h-2zM48 5h2v1h-2zM56 5h3v1h-3zM61 5h4v1h-4zM66 5h1v1h-1zM72 5h1v1h-1zM0 6h7v1h-7zM8 6h1v1h-1zM10 6h1v1h-1zM12 6h1v1h-1zM14 6h1v1h-1zM16 6h1v1h-1zM18 6h1v1h-1zM20 6h1v1h-1zM22 6h1v1h-1zM24 6h1v1h-1zM26 6h1v1h-1zM28 6h1v1h-1zM30 6h1v1h-1zM32 6h1v1h-1zM34 6h1v1h-1zM36 6h1v1h-1zM38 6h1v1h-1zM40 6h1v1h-1zM42 6h1v1h-1zM44 6h1v1h-1zM46 6h1v1h-1zM48 6h1v1h-1zM50 6h1v1h-1zM52 6h1v1h-1zM54 6h1v1h-1zM56 6h1v1h-1zM58 6h1v1h-1zM60 6h1v1h-1zM62 6h1v1h-1zM64 6h1v1h-1zM66 6h7v1h-7zM8 7h1v1h-1zM11 7h3v1h-3zM15 7h1v1h-1zM17 7h1v1h-1zM20 7h1v1h-1zM24 7h1v1h-1zM28 7h2v1h-2zM31 7h5v1h-5zM37 7h1v1h-1zM40 7h1v1h-1zM44 7h1v1h-1zM48 7h1v1h-1zM51 7h3v1h-3zM55 7h1v1h-1zM57 7h2v1h-2zM61 7h2v1h-2zM2 8h2v1h-2zM5 8h4v1h-4zM11 8h3v1h-3zM15 8h4v1h-4zM21 8h1v1h-1zM24 8h8v1h-8zM35 8h2v1h-2zM38 8h14v1h-14zM55 8h2v1h-2zM61 8h5v1h-5zM67 8h3v1h-3zM3 9h1v1h-1zM7 9h1v1h-1zM11 9h2v1h-2zM15 9h2v1h-2zM20 9h1v1h-1zM22 9h3v1h-3zM29 9h2v1h-2zM33 9h2v1h-2zM37 9h3v1h-3zM41 9h4v1h-4zM46 9h1v1h-1zM52 9h4v1h-4zM57 9h1v1h-1zM60 9h3v1h-3zM65 9h3v1h-3zM69 9h4v1h-4zM5 10h2v1h-2zM9 10h1v1h-1zM11 10h9v1h-9zM21 10h2v1h-2zM26 10h1v1h-1zM28 10h1v1h-1zM30 10h6v1h-6zM37 10h3v1h-3zM41 10h1v1h-1zM44 10h2v1h-2zM48 10h1v1h-1zM50 10h3v1h-3zM57 10h2v1h-2zM63 10h2v1h-2zM67 10h2v1h-2zM0 11h3v1h-3zM5 11h1v1h-1zM7 11h5v1h-5zM15 11h4v1h-4zM20 11h3v1h-3zM28 11h1v1h-1zM30 11h1v1h-1zM32 11h1v1h-1zM34 11h4v1h-4zM40 11h2v1h-2zM44 11h1v1h-1zM53 11h4v1h-4zM60 11h1v1h-1zM62 11h2v1h-2zM66 11h1v1h-1zM70 11h3v1h-3zM0 12h1v1h-1zM3 12h7v1h-7zM12 12h3v1h-3zM17 12h6v1h-6zM24 12h1v1h-1zM26 12h2v1h-2zM30 12h2v1h-2zM33 12h2v1h-2zM36 12h1v1h-1zM38 12h1v1h-1zM41 12h2v1h-2zM46 12h1v1h-1zM48 12h1v1h-1zM54 12h1v1h-1zM59 12h1v1h-1zM63 12h3v1h-3zM69 12h1v1h-1zM71 12h2v1h-2zM2 13h3v1h-3zM7 13h2v1h-2zM11 13h1v1h-1zM16 13h1v1h-1zM20 13h2v1h-2zM23 13h1v1h-1zM25 13h3v1h-3zM30 13h1v1h-1zM33 13h8v1h-8zM42 13h1v1h-1zM44 13h1v1h-1zM48 13h1v1h-1zM50 13h3v1h-3zM57 13h1v1h-1zM62 13h1v1h-1zM65 13h2v1h-2zM68 13h1v1h-1zM70 13h1v1h-1zM5 14h4v1h-4zM12 14h1v1h-1zM14 14h1v1h-1zM17 14h1v1h-1zM27 14h1v1h-1zM30 14h4v1h-4zM35 14h1v1h-1zM37 14h1v1h-1zM42 14h6v1h-6zM50 14h9v1h-9zM61 14h1v1h-1zM64 14h1v1h-1zM67 14h3v1h-3zM72 14h1v1h-1zM0 15h2v1h-2zM9 15h1v1h-1zM11 15h1v1h-1zM13 15h3v1h-3zM17 15h2v1h-2zM20 15h2v1h-2zM26 15h4v1h-4zM33 15h1v1h-1zM36 15h1v1h-1zM38 15h6v1h-6zM48 15h3v1h-3zM56 15h1v1h-1zM58 15h3v1h-3zM64 15h1v1h-1zM66 15h2v1h-2zM0 16h1v1h-1zM6 16h3v1h-3zM12 16h3v1h-3zM16 16h4v1h-4zM24 16h1v1h-1zM26 16h1v1h-1zM34 16h4v1h-4zM43 16h3v1h-3zM47 16h9v1h-9zM60 16h3v1h-3zM64 16h1v1h-1zM67 16h1v1h-1zM71 16h2v1h-2zM0 17h1v1h-1zM3 17h1v1h-1zM9 17h1v1h-1zM11 17h1v1h-1zM13 17h3v1h-3zM17 17h1v1h-1zM19 17h1v1h-1zM24 17h3v1h-3zM28 17h1v1h-1zM30 17h3v1h-3zM35 17h1v1h-1zM37 17h4v1h-4zM43 17h3v1h-3zM50 17h1v1h-1zM53 17h6v1h-6zM61 17h4v1h-4zM66 17h4v1h-4zM71 17h1v1h-1zM0 18h4v1h-4zM5 18h2v1h-2zM8 18h5v1h-5zM17 18h2v1h-2zM23 18h1v1h-1zM26 18h2v1h-2zM35 18h2v1h-2zM39 18h1v1h-1zM43 18h3v1h-3zM47 18h1v1h-1zM50 18h1v1h-1zM53 18h1v1h-1zM56 18h1v1h-1zM58 18h1v1h-1zM62 18h1v1h-1zM70 18h1v1h-1zM72 18h1v1h-1zM1 19h1v1h-1zM3 19h1v1h-1zM5 19h1v1h-1zM7 19h5v1h-5zM13 19h4v1h-4zM19 19h1v1h-1zM21 19h4v1h-4zM27 19h1v1h-1zM29 19h1v1h-1zM31 19h1v1h-1zM35 19h2v1h-2zM38 19h3v1h-3zM42 19h12v1h-12zM56 19h1v1h-1zM63 19h1v1h-1zM67 19h1v1h-1zM70 19h3v1h-3zM0 20h1v1h-1zM2 20h2v1h-2zM6 20h1v1h-1zM18 20h2v1h-2zM21 20h3v1h-3zM26 20h2v1h-2zM32 20h1v1h-1zM34 20h1v1h-1zM38 20h2v1h-2zM41 20h1v1h-1zM44 20h1v1h-1zM48 20h1v1h-1zM56 20h1v1h-1zM58 20h1v1h-1zM64 20h1v1h-1zM67 20h1v1h-1zM71 20h1v1h-1zM3 21h3v1h-3zM9 21h1v1h-1zM13 21h4v1h-4zM28 21h1v1h-1zM30 21h5v1h-5zM42 21h5v1h-5zM49 21h1v1h-1zM51 21h2v1h-2zM56 21h3v1h-3zM63 21h2v1h-2zM66 21h4v1h-4zM71 21h1v1h-1zM0 22h1v1h-1zM2 22h2v1h-2zM5 22h4v1h-4zM13 22h1v1h-1zM16 22h1v1h-1zM18 22h1v1h-1zM21 22h6v1h-6zM31 22h2v1h-2zM34 22h1v1h-1zM36 22h1v1h-1zM41 22h3v1h-3zM47 22h3v1h-3zM52 22h1v1h-1zM57 22h2v1h-2zM65 22h5v1h-5zM72 22h1v1h-1zM4 23h1v1h-1zM9 23h2v1h-2zM13 23h1v1h-1zM16 23h1v1h-1zM19 23h4v1h-4zM24 23h2v1h-2zM28 23h1v1h-1zM36 23h2v1h-2zM39 23h1v1h-1zM43 23h5v1h-5zM50 23h6v1h-6zM60 23h1v1h-1zM62 23h1v1h-1zM67 23h6v1h-6zM4 24h5v1h-5zM10 24h1v1h-1zM15 24h3v1h-3zM20 24h9v1h-9zM32 24h2v1h-2zM37 24h13v1h-13zM51 24h2v1h-2zM58 24h3v1h-3zM64 24h8v1h-8zM1 25h4v1h-4zM8 25h2v1h-2zM13 25h3v1h-3zM21 25h4v1h-4zM28 25h1v1h-1zM30 25h1v1h-1zM32 25h7v1h-7zM41 25h2v1h-2zM44 25h1v1h-1zM48 25h1v1h-1zM50 25h4v1h-4zM55 25h2v1h-2zM61 25h2v1h-2zM64 25h1v1h-1zM68 25h1v1h-1zM72 25h1v1h-1zM3 26h2v1h-2zM6 26h1v1h-1zM8 26h1v1h-1zM10 26h1v1h-1zM12 26h1v1h-1zM18 26h1v1h-1zM20 26h3v1h-3zM24 26h1v1h-1zM26 26h1v1h-1zM28 26h2v1h-2zM32 26h10v1h-10zM44 26h1v1h-1zM46 26h1v1h-1zM48 26h2v1h-2zM53 26h4v1h-4zM58 26h1v1h-1zM61 26h1v1h-1zM64 26h1v1h-1zM66 26h1v1h-1zM68 26h1v1h-1zM71 26h2v1h-2zM0 27h3v1h-3zM4 27h1v1h-1zM8 27h1v1h-1zM11 27h2v1h-2zM14 27h1v1h-1zM16 27h2v1h-2zM19 27h3v1h-3zM24 27h1v1h-1zM28 27h1v1h-1zM30 27h1v1h-1zM32 27h1v1h-1zM38 27h1v1h-1zM41 27h1v1h-1zM43 27h2v1h-2zM48 27h1v1h-1zM50 27h8v1h-8zM63 27h2v1h-2zM68 27h4v1h-4zM0 28h1v1h-1zM2 28h7v1h-7zM10 28h1v1h-1zM12 28h2v1h-2zM16 28h6v1h-6zM24 28h5v1h-5zM41 28h1v1h-1zM44 28h5v1h-5zM51 28h3v1h-3zM55 28h2v1h-2zM58 28h2v1h-2zM63 28h6v1h-6zM71 28h2v1h-2zM2 29h2v1h-2zM16 29h2v1h-2zM19 29h1v1h-1zM24 29h2v1h-2zM31 29h2v1h-2zM34 29h1v1h-1zM37 29h2v1h-2zM42 29h1v1h-1zM48 29h3v1h-3zM53 29h3v1h-3zM57 29h1v1h-1zM61 29h1v1h-1zM63 29h1v1h-1zM65 29h3v1h-3zM70 29h1v1h-1zM0 30h1v1h-1zM6 30h2v1h-2zM9 30h3v1h-3zM16 30h2v1h-2zM19 30h6v1h-6zM27 30h4v1h-4zM37 30h1v1h-1zM43 30h1v1h-1zM48 30h2v1h-2zM52 30h1v1h-1zM57 30h5v1h-5zM63 30h1v1h-1zM65 30h4v1h-4zM70 30h3v1h-3zM0 31h3v1h-3zM4 31h2v1h-2zM7 31h2v1h-2zM10 31h2v1h-2zM14 31h2v1h-2zM17 31h1v1h-1zM19 31h1v1h-1zM22 31h3v1h-3zM26 31h1v1h-1zM29 31h2v1h-2zM32 31h1v1h-1zM34 31h1v1h-1zM37 31h1v1h-1zM39 31h1v1h-1zM42 31h4v1h-4zM47 31h1v1h-1zM49 31h1v1h-1zM51 31h1v1h-1zM53 31h5v1h-5zM59 31h2v1h-2zM66 31h2v1h-2zM71 31h1v1h-1zM1 32h3v1h-3zM5 32h2v1h-2zM10 32h8v1h-8zM23 32h5v1h-5zM30 32h2v1h-2zM34 32h3v1h-3zM38 32h1v1h-1zM43 32h1v1h-1zM46 32h2v1h-2zM49 32h1v1h-1zM55 32h2v1h-2zM58 32h2v1h-2zM61 32h1v1h-1zM63 32h1v1h-1zM66 32h1v1h-1zM71 32h2v1h-2zM0 33h6v1h-6zM7 33h2v1h-2zM10 33h1v1h-1zM12 33h6v1h-6zM21 33h1v1h-1zM24 33h1v1h-1zM27 33h7v1h-7zM36 33h7v1h-7zM45 33h1v1h-1zM49 33h1v1h-1zM51 33h2v1h-2zM54 33h2v1h-2zM60 33h5v1h-5zM66 33h2v1h-2zM71 33h1v1h-1zM2 34h2v1h-2zM6 34h1v1h-1zM8 34h4v1h-4zM20 34h2v1h-2zM23 34h1v1h-1zM25 34h2v1h-2zM28 34h4v1h-4zM33 34h1v1h-1zM37 34h7v1h-7zM47 34h3v1h-3zM51 34h6v1h-6zM63 34h2v1h-2zM71 34h2v1h-2zM1 35h2v1h-2zM4 35h2v1h-2zM7 35h1v1h-1zM12 35h3v1h-3zM17 35h1v1h-1zM19 35h2v1h-2zM22 35h1v1h-1zM25 35h1v1h-1zM30 35h4v1h-4zM41 35h1v1h-1zM43 35h2v1h-2zM50 35h4v1h-4zM55 35h2v1h-2zM58 35h1v1h-1zM65 35h1v1h-1zM67 35h1v1h-1zM71 35h2v1h-2zM3 36h1v1h-1zM6 36h1v1h-1zM11 36h3v1h-3zM16 36h3v1h-3zM22 36h1v1h-1zM24 36h2v1h-2zM32 36h3v1h-3zM37 36h2v1h-2zM43 36h1v1h-1zM45 36h1v1h-1zM48 36h3v1h-3zM54 36h7v1h-7zM62 36h6v1h-6zM70 36h1v1h-1zM72 36h1v1h-1zM4 37h1v1h-1zM11 37h2v1h-2zM17 37h1v1h-1zM22 37h1v1h-1zM24 37h4v1h-4zM30 37h9v1h-9zM40 37h5v1h-5zM48 37h1v1h-1zM51 37h3v1h-3zM55 37h1v1h-1zM57 37h1v1h-1zM62 37h5v1h-5zM68 37h3v1h-3zM1 38h1v1h-1zM5 38h2v1h-2zM8 38h3v1h-3zM15 38h2v1h-2zM19 38h1v1h-1zM21 38h4v1h-4zM26 38h1v1h-1zM29 38h4v1h-4zM38 38h4v1h-4zM43 38h1v1h-1zM45 38h2v1h-2zM51 38h1v1h-1zM53 38h1v1h-1zM57 38h1v1h-1zM60 38h2v1h-2zM64 38h2v1h-2zM69 38h1v1h-1zM0 39h5v1h-5zM8 39h3v1h-3zM13 39h2v1h-2zM16 39h1v1h-1zM20 39h1v1h-1zM22 39h2v1h-2zM25 39h1v1h-1zM29 39h1v1h-1zM31 39h1v1h-1zM33 39h1v1h-1zM37 39h6v1h-6zM45 39h1v1h-1zM49 39h1v1h-1zM52 39h1v1h-1zM55 39h2v1h-2zM59 39h2v1h-2zM62 39h2v1h-2zM65 39h1v1h-1zM67 39h1v1h-1zM0 40h3v1h-3zM4 40h3v1h-3zM8 40h2v1h-2zM11 40h2v1h-2zM17 40h2v1h-2zM21 40h1v1h-1zM23 40h4v1h-4zM28 40h1v1h-1zM32 40h5v1h-5zM39 40h2v1h-2zM43 40h2v1h-2zM48 40h5v1h-5zM54 40h1v1h-1zM56 40h2v1h-2zM66 40h3v1h-3zM70 40h3v1h-3zM0 41h1v1h-1zM8 41h3v1h-3zM14 41h1v1h-1zM16 41h1v1h-1zM19 41h1v1h-1zM21 41h1v1h-1zM27 41h1v1h-1zM30 41h1v1h-1zM32 41h1v1h-1zM36 41h1v1h-1zM39 41h1v1h-1zM41 41h1v1h-1zM47 41h3v1h-3zM54 41h4v1h-4zM62 41h3v1h-3zM69 41h3v1h-3zM0 42h3v1h-3zM6 42h1v1h-1zM9 42h1v1h-1zM13 42h6v1h-6zM20 42h2v1h-2zM23 42h3v1h-3zM27 42h1v1h-1zM30 42h2v1h-2zM34 42h4v1h-4zM39 42h2v1h-2zM43 42h2v1h-2zM47 42h1v1h-1zM52 42h2v1h-2zM55 42h1v1h-1zM60 42h1v1h-1zM62 42h2v1h-2zM65 42h1v1h-1zM1 43h2v1h-2zM8 43h2v1h-2zM11 43h2v1h-2zM15 43h1v1h-1zM19 43h1v1h-1zM21 43h1v1h-1zM26 43h2v1h-2zM31 43h5v1h-5zM38 43h3v1h-3zM45 43h2v1h-2zM48 43h2v1h-2zM54 43h2v1h-2zM57 43h2v1h-2zM62 43h2v1h-2zM65 43h1v1h-1zM69 43h1v1h-1zM71 43h2v1h-2zM0 44h2v1h-2zM3 44h6v1h-6zM14 44h2v1h-2zM17 44h1v1h-1zM19 44h3v1h-3zM24 44h7v1h-7zM34 44h2v1h-2zM37 44h1v1h-1zM39 44h1v1h-1zM41 44h8v1h-8zM52 44h2v1h-2zM57 44h1v1h-1zM59 44h1v1h-1zM64 44h5v1h-5zM2 45h3v1h-3zM8 45h2v1h-2zM11 45h1v1h-1zM14 45h11v1h-11zM28 45h2v1h-2zM33 45h1v1h-1zM36 45h4v1h-4zM44 45h1v1h-1zM48 45h1v1h-1zM51 45h3v1h-3zM56 45h6v1h-6zM64 45h1v1h-1zM68 45h1v1h-1zM0 46h5v1h-5zM6 46h1v1h-1zM8 46h2v1h-2zM13 46h2v1h-2zM17 46h1v1h-1zM21 46h1v1h-1zM23 46h2v1h-2zM26 46h1v1h-1zM28 46h3v1h-3zM33 46h6v1h-6zM44 46h1v1h-1zM46 46h1v1h-1zM48 46h1v1h-1zM52 46h1v1h-1zM54 46h2v1h-2zM59 46h1v1h-1zM64 46h1v1h-1zM66 46h1v1h-1zM68 46h1v1h-1zM71 46h1v1h-1zM2 47h1v1h-1zM4 47h1v1h-1zM8 47h3v1h-3zM15 47h1v1h-1zM22 47h3v1h-3zM28 47h5v1h-5zM34 47h6v1h-6zM42 47h3v1h-3zM48 47h2v1h-2zM51 47h1v1h-1zM54 47h1v1h-1zM57 47h1v1h-1zM61 47h2v1h-2zM64 47h1v1h-1zM68 47h1v1h-1zM70 47h2v1h-2zM0 48h1v1h-1zM2 48h8v1h-8zM12 48h1v1h-1zM14 48h1v1h-1zM16 48h1v1h-1zM19 48h2v1h-2zM24 48h5v1h-5zM30 48h2v1h-2zM35 48h3v1h-3zM40 48h1v1h-1zM43 48h7v1h-7zM56 48h1v1h-1zM61 48h1v1h-1zM64 48h6v1h-6zM71 48h2v1h-2zM0 49h6v1h-6zM8 49h7v1h-7zM16 49h2v1h-2zM19 49h1v1h-1zM23 49h2v1h-2zM30 49h3v1h-3zM34 49h1v1h-1zM36 49h1v1h-1zM38 49h1v1h-1zM41 49h1v1h-1zM43 49h3v1h-3zM49 49h1v1h-1zM51 49h2v1h-2zM61 49h2v1h-2zM64 49h2v1h-2zM71 49h2v1h-2zM0 50h3v1h-3zM6 50h1v1h-1zM8 50h1v1h-1zM12 50h1v1h-1zM22 50h1v1h-1zM26 50h2v1h-2zM30 50h4v1h-4zM39 50h4v1h-4zM44 50h5v1h-5zM50 50h1v1h-1zM53 50h1v1h-1zM55 50h6v1h-6zM64 50h1v1h-1zM66 50h1v1h-1zM68 50h2v1h-2zM0 51h1v1h-1zM3 51h1v1h-1zM8 51h1v1h-1zM10 51h1v1h-1zM12 51h2v1h-2zM16 51h6v1h-6zM24 51h2v1h-2zM28 51h1v1h-1zM37 51h3v1h-3zM43 51h3v1h-3zM48 51h4v1h-4zM54 51h4v1h-4zM65 51h3v1h-3zM69 51h3v1h-3zM3 52h1v1h-1zM5 52h2v1h-2zM8 52h3v1h-3zM12 52h2v1h-2zM16 52h2v1h-2zM20 52h2v1h-2zM26 52h2v1h-2zM29 52h2v1h-2zM32 52h3v1h-3zM38 52h4v1h-4zM43 52h1v1h-1zM46 52h1v1h-1zM50 52h1v1h-1zM53 52h2v1h-2zM56 52h2v1h-2zM62 52h2v1h-2zM66 52h5v1h-5zM2 53h3v1h-3zM9 53h1v1h-1zM13 53h1v1h-1zM17 53h1v1h-1zM25 53h2v1h-2zM28 53h3v1h-3zM39 53h2v1h-2zM48 53h3v1h-3zM52 53h1v1h-1zM56 53h3v1h-3zM62 53h2v1h-2zM72 53h1v1h-1zM2 54h1v1h-1zM4 54h1v1h-1zM6 54h1v1h-1zM8 54h6v1h-6zM21 54h5v1h-5zM28 54h1v1h-1zM34 54h1v1h-1zM38 54h4v1h-4zM46 54h1v1h-1zM50 54h3v1h-3zM54 54h2v1h-2zM59 54h1v1h-1zM64 54h3v1h-3zM69 54h1v1h-1zM3 55h3v1h-3zM7 55h5v1h-5zM13 55h1v1h-1zM15 55h4v1h-4zM24 55h1v1h-1zM26 55h3v1h-3zM32 55h3v1h-3zM36 55h2v1h-2zM40 55h3v1h-3zM44 55h1v1h-1zM47 55h3v1h-3zM51 55h1v1h-1zM57 55h2v1h-2zM60 55h2v1h-2zM63 55h2v1h-2zM66 55h5v1h-5zM5 56h4v1h-4zM10 56h2v1h-2zM13 56h7v1h-7zM22 56h3v1h-3zM29 56h1v1h-1zM32 56h2v1h-2zM35 56h3v1h-3zM39 56h1v1h-1zM41 56h4v1h-4zM46 56h2v1h-2zM50 56h2v1h-2zM54 56h1v1h-1zM58 56h2v1h-2zM67 56h1v1h-1zM69 56h2v1h-2zM0 57h6v1h-6zM9 57h1v1h-1zM20 57h1v1h-1zM22 57h1v1h-1zM24 57h2v1h-2zM27 57h3v1h-3zM32 57h2v1h-2zM37 57h2v1h-2zM43 57h1v1h-1zM45 57h3v1h-3zM50 57h3v1h-3zM54 57h3v1h-3zM62 57h2v1h-2zM65 57h4v1h-4zM71 57h1v1h-1zM4 58h3v1h-3zM11 58h2v1h-2zM15 58h1v1h-1zM17 58h3v1h-3zM22 58h1v1h-1zM28 58h1v1h-1zM33 58h1v1h-1zM36 58h2v1h-2zM39 58h2v1h-2zM45 58h2v1h-2zM48 58h9v1h-9zM60 58h1v1h-1zM62 58h2v1h-2zM65 58h1v1h-1zM67 58h2v1h-2zM3 59h1v1h-1zM5 59h1v1h-1zM16 59h4v1h-4zM21 59h3v1h-3zM26 59h2v1h-2zM30 59h2v1h-2zM33 59h2v1h-2zM36 59h5v1h-5zM43 59h1v1h-1zM46 59h4v1h-4zM51 59h2v1h-2zM54 59h1v1h-1zM59 59h1v1h-1zM61 59h1v1h-1zM65 59h2v1h-2zM69 59h2v1h-2zM1 60h3v1h-3zM6 60h1v1h-1zM8 60h2v1h-2zM14 60h2v1h-2zM18 60h2v1h-2zM26 60h1v1h-1zM31 60h1v1h-1zM33 60h1v1h-1zM36 60h4v1h-4zM45 60h3v1h-3zM49 60h1v1h-1zM51 60h2v1h-2zM57 60h1v1h-1zM61 60h2v1h-2zM64 60h2v1h-2zM68 60h2v1h-2zM71 60h2v1h-2zM2 61h4v1h-4zM7 61h2v1h-2zM10 61h4v1h-4zM16 61h2v1h-2zM19 61h4v1h-4zM24 61h2v1h-2zM32 61h2v1h-2zM36 61h2v1h-2zM39 61h1v1h-1zM41 61h4v1h-4zM46 61h1v1h-1zM48 61h6v1h-6zM57 61h3v1h-3zM62 61h10v1h-10zM0 62h1v1h-1zM4 62h3v1h-3zM11 62h1v1h-1zM13 62h3v1h-3zM17 62h1v1h-1zM19 62h1v1h-1zM23 62h1v1h-1zM28 62h2v1h-2zM31 62h2v1h-2zM36 62h6v1h-6zM44 62h2v1h-2zM47 62h3v1h-3zM52 62h1v1h-1zM58 62h1v1h-1zM66 62h1v1h-1zM69 62h3v1h-3zM3 63h1v1h-1zM5 63h1v1h-1zM7 63h2v1h-2zM12 63h2v1h-2zM16 63h1v1h-1zM19 63h2v1h-2zM23 63h3v1h-3zM27 63h1v1h-1zM31 63h1v1h-1zM36 63h1v1h-1zM41 63h1v1h-1zM43 63h2v1h-2zM52 63h2v1h-2zM55 63h1v1h-1zM57 63h3v1h-3zM62 63h3v1h-3zM67 63h2v1h-2zM70 63h1v1h-1zM0 64h1v1h-1zM6 64h1v1h-1zM9 64h1v1h-1zM12 64h3v1h-3zM16 64h2v1h-2zM23 64h10v1h-10zM34 64h1v1h-1zM36 64h1v1h-1zM41 64h1v1h-1zM43 64h9v1h-9zM53 64h2v1h-2zM57 64h1v1h-1zM60 64h1v1h-1zM63 64h6v1h-6zM71 64h1v1h-1zM8 65h1v1h-1zM11 65h2v1h-2zM15 65h1v1h-1zM17 65h1v1h-1zM22 65h3v1h-3zM28 65h2v1h-2zM32 65h2v1h-2zM37 65h3v1h-3zM41 65h4v1h-4zM48 65h1v1h-1zM51 65h1v1h-1zM53 65h2v1h-2zM57 65h2v1h-2zM63 65h2v1h-2zM68 65h4v1h-4zM0 66h7v1h-7zM11 66h4v1h-4zM19 66h2v1h-2zM24 66h1v1h-1zM26 66h1v1h-1zM28 66h1v1h-1zM32 66h3v1h-3zM36 66h1v1h-1zM40 66h3v1h-3zM44 66h1v1h-1zM46 66h1v1h-1zM48 66h1v1h-1zM51 66h3v1h-3zM60 66h1v1h-1zM62 66h1v1h-1zM64 66h1v1h-1zM66 66h1v1h-1zM68 66h2v1h-2zM72 66h1v1h-1zM0 67h1v1h-1zM6 67h1v1h-1zM8 67h3v1h-3zM12 67h1v1h-1zM17 67h1v1h-1zM20 67h1v1h-1zM22 67h3v1h-3zM28 67h1v1h-1zM33 67h1v1h-1zM36 67h1v1h-1zM38 67h1v1h-1zM40 67h1v1h-1zM44 67h1v1h-1zM48 67h2v1h-2zM51 67h1v1h-1zM55 67h3v1h-3zM59 67h1v1h-1zM61 67h4v1h-4zM68 67h1v1h-1zM72 67h1v1h-1zM0 68h1v1h-1zM2 68h3v1h-3zM6 68h1v1h-1zM9 68h2v1h-2zM15 68h2v1h-2zM23 68h7v1h-7zM33 68h1v1h-1zM35 68h1v1h-1zM38 68h1v1h-1zM43 68h6v1h-6zM52 68h1v1h-1zM58 68h1v1h-1zM60 68h1v1h-1zM62 68h1v1h-1zM64 68h5v1h-5zM0 69h1v1h-1zM2 69h3v1h-3zM6 69h1v1h-1zM8 69h1v1h-1zM10 69h2v1h-2zM16 69h2v1h-2zM19 69h1v1h-1zM21 69h1v1h-1zM24 69h1v1h-1zM26 69h1v1h-1zM28 69h1v1h-1zM31 69h1v1h-1zM34 69h2v1h-2zM42 69h1v1h-1zM47 69h5v1h-5zM57 69h1v1h-1zM59 69h9v1h-9zM70 69h1v1h-1zM72 69h1v1h-1zM0 70h1v1h-1zM2 70h3v1h-3zM6 70h1v1h-1zM8 70h3v1h-3zM12 70h2v1h-2zM16 70h4v1h-4zM22 70h4v1h-4zM28 70h1v1h-1zM30 70h1v1h-1zM32 70h2v1h-2zM37 70h1v1h-1zM39 70h1v1h-1zM43 70h5v1h-5zM50 70h5v1h-5zM56 70h4v1h-4zM62 70h2v1h-2zM65 70h1v1h-1zM69 70h2v1h-2zM0 71h1v1h-1zM6 71h1v1h-1zM11 71h2v1h-2zM15 71h1v1h-1zM19 71h1v1h-1zM21 71h3v1h-3zM27 71h2v1h-2zM30 71h2v1h-2zM33 71h3v1h-3zM38 71h1v1h-1zM47 71h1v1h-1zM50 71h2v1h-2zM55 71h1v1h-1zM58 71h1v1h-1zM60 71h1v1h-1zM62 71h2v1h-2zM67 71h1v1h-1zM70 71h3v1h-3zM0 72h7v1h-7zM8 72h2v1h-2zM11 72h2v1h-2zM18 72h4v1h-4zM27 72h3v1h-3zM34 72h1v1h-1zM40 72h3v1h-3zM44 72h3v1h-3zM49 72h1v1h-1zM52 72h2v1h-2zM55 72h2v1h-2zM58 72h2v1h-2zM61 72h6v1h-6zM68 72h1v1h-1zM71 72h2v1h-2z"/></svg>
<div style="left:326.0px;top:314.0px;width:29px;height:29px;border-radius:50%;background:#fe0000"></div>
<span class="t" style="top:319.69px;font-size:17.5px;color:#fff;left:335.63px;">1</span>
<div style="left:22.0px;top:349.0px;width:29px;height:29px;border-radius:50%;background:#fe0000"></div>
<span class="t" style="top:354.69px;font-size:17.5px;color:#fff;left:31.63px;">2</span>
<div style="left:211.0px;top:443.0px;width:29px;height:29px;border-radius:50%;background:#fe0000"></div>
<span class="t" style="top:448.69px;font-size:17.5px;color:#fff;left:220.63px;">3</span>
</body></html>
